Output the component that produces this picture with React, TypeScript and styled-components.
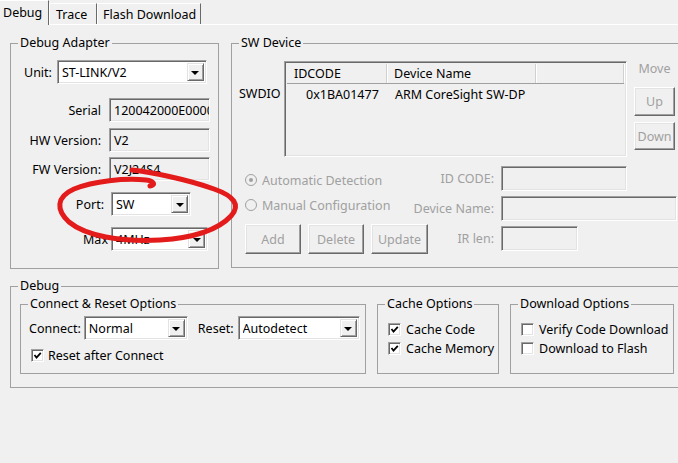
import React from 'react';
import styled, { createGlobalStyle } from 'styled-components';

const GlobalStyle = createGlobalStyle`
  html, body {
    margin: 0;
    padding: 0;
    background: #f0f0f0;
  }
  body {
    font-family: "Noto Sans", "DejaVu Sans", sans-serif;
    font-size: 12px;
    color: #000;
  }
`;

const Window = styled.div`
  position: relative;
  width: 678px;
  height: 463px;
  overflow: hidden;
  background: #f0f0f0;
`;

const TabStrip = styled.div`
  display: flex;
  align-items: flex-start;
  height: 25px;
  box-shadow: inset 0 -1px 0 #fff;
`;

const Tab = styled.div<{ $active?: boolean; $w: number; $pad: number }>`
  box-sizing: border-box;
  width: ${p => p.$w}px;
  height: ${p => (p.$active ? 25 : 21)}px;
  margin-top: ${p => (p.$active ? 0 : 3)}px;
  padding-left: ${p => p.$pad}px;
  padding-bottom: ${p => (p.$active ? 2 : 0)}px;
  display: flex;
  align-items: center;
  background: #f0f0f0;
  border-left: ${p => (p.$active ? 0 : 1)}px solid #fff;
  border-top: 1px solid #fff;
  border-right: 1px solid #696969;
  white-space: nowrap;
  font-size: 12.5px;
`;

const Page = styled.div`
  display: flex;
  flex-direction: column;
  padding: 11px 0 0 10px;
`;

const TopRow = styled.div`
  display: flex;
  gap: 12px;
`;

const Group = styled.fieldset<{ $w: number; $h: number }>`
  margin: 0;
  padding: 0;
  min-width: 0;
  flex-shrink: 0;
  box-sizing: border-box;
  width: ${p => p.$w}px;
  height: ${p => p.$h}px;
  border: 1px solid #a0a0a0;
`;

const Legend = styled.legend`
  margin-left: 7px;
  padding: 0 2px;
  line-height: 14px;
  font-size: 12.5px;
  white-space: nowrap;
`;

/* ---------- inputs ---------- */

const Sunken = styled.div<{ $w: number; $h?: number; $white?: boolean }>`
  box-sizing: border-box;
  width: ${p => p.$w}px;
  height: ${p => p.$h ?? 24}px;
  flex-shrink: 0;
  display: flex;
  align-items: center;
  overflow: hidden;
  white-space: nowrap;
  background: ${p => (p.$white ? '#fff' : '#f0f0f0')};
  border-top: 1px solid #a0a0a0;
  border-left: 1px solid #a0a0a0;
  border-right: 1px solid #fff;
  border-bottom: 1px solid #fff;
  box-shadow: inset 1px 1px 0 #696969, inset -1px -1px 0 #e3e3e3;
  padding-left: 4px;
`;

const ComboText = styled.span`
  flex: 1;
  overflow: hidden;
`;

const DropButton = styled.span`
  box-sizing: border-box;
  width: 17px;
  height: calc(100% - 4px);
  margin-right: 2px;
  display: flex;
  align-items: center;
  justify-content: center;
  background: #f0f0f0;
  border-top: 1px solid #e3e3e3;
  border-left: 1px solid #e3e3e3;
  border-right: 1px solid #696969;
  border-bottom: 1px solid #696969;
  box-shadow: inset 1px 1px 0 #fff, inset -1px -1px 0 #a0a0a0;

  &::after {
    content: '';
    border-left: 4px solid transparent;
    border-right: 4px solid transparent;
    border-top: 4px solid #000;
    margin-top: 1px;
  }
`;

const Combo: React.FC<{ w: number; h?: number; value: string }> = ({ w, h, value }) => (
  <Sunken $w={w} $h={h} $white>
    <ComboText>{value}</ComboText>
    <DropButton />
  </Sunken>
);

const Button = styled.div<{ $w: number; $h: number; $top?: number }>`
  box-sizing: border-box;
  width: ${p => p.$w}px;
  height: ${p => p.$h}px;
  margin-top: ${p => p.$top ?? 0}px;
  flex-shrink: 0;
  display: flex;
  align-items: center;
  justify-content: center;
  color: #a0a0a0;
  font-size: 12.5px;
  border-top: 1px solid #fff;
  border-left: 1px solid #fff;
  border-right: 1px solid #696969;
  border-bottom: 1px solid #696969;
  box-shadow: inset -1px -1px 0 #a0a0a0, inset 1px 1px 0 #e3e3e3;
`;

const CheckBox = styled.span`
  box-sizing: border-box;
  width: 13px;
  height: 13px;
  flex-shrink: 0;
  display: flex;
  align-items: center;
  justify-content: center;
  background: #fff;
  border-top: 1px solid #a0a0a0;
  border-left: 1px solid #a0a0a0;
  border-right: 1px solid #fff;
  border-bottom: 1px solid #fff;
  box-shadow: inset 1px 1px 0 #696969, inset -1px -1px 0 #e3e3e3;
`;

const Check: React.FC<{ checked?: boolean }> = ({ checked }) => (
  <CheckBox>
    {checked && (
      <svg width="9" height="9" viewBox="0 0 9 9">
        <path d="M1.5 4 L3.5 6.5 L7.8 1.8" fill="none" stroke="#000" strokeWidth="1.8" />
      </svg>
    )}
  </CheckBox>
);

const Radio = styled.span<{ $on?: boolean }>`
  box-sizing: border-box;
  width: 12px;
  height: 12px;
  flex-shrink: 0;
  border-radius: 50%;
  border: 1px solid #a0a0a0;
  background: #f0f0f0;
  display: flex;
  align-items: center;
  justify-content: center;

  &::after {
    content: '';
    width: 4px;
    height: 4px;
    border-radius: 50%;
    background: ${p => (p.$on ? '#a0a0a0' : 'transparent')};
  }
`;

const OptionRow = styled.div<{ $gap: number; $top: number; $h?: number; $left?: number }>`
  display: flex;
  align-items: center;
  gap: ${p => p.$gap}px;
  margin-top: ${p => p.$top}px;
  margin-left: ${p => p.$left ?? 0}px;
  height: ${p => p.$h ?? 16}px;
  white-space: nowrap;
  font-size: 12.5px;
`;

const Dim = styled.span`
  color: #a0a0a0;
`;

/* ---------- debug adapter ---------- */

const AdapterBody = styled.div`
  display: flex;
  flex-direction: column;
`;

const UnitRow = styled.div`
  display: flex;
  align-items: center;
  margin-top: 10px;
  padding-left: 13px;
  gap: 5px;
  font-size: 12.5px;
`;

const FieldRow = styled.div<{ $top: number; $labelW: number; $gap: number }>`
  display: flex;
  align-items: center;
  margin-top: ${p => p.$top}px;
  font-size: 12.5px;

  & > label {
    box-sizing: border-box;
    width: ${p => p.$labelW}px;
    margin-right: ${p => p.$gap}px;
    text-align: right;
    white-space: nowrap;
    overflow: hidden;
    flex-shrink: 0;
  }
`;

/* ---------- sw device ---------- */

const DeviceTop = styled.div`
  display: flex;
  margin-top: 11px;
  padding-left: 7px;
`;

const SideLabel = styled.div`
  width: 45px;
  padding-top: 26px;
  line-height: 14px;
  font-size: 12.5px;
`;

const ListView = styled.div`
  box-sizing: border-box;
  width: 343px;
  height: 96px;
  padding: 2px;
  background: #f0f0f0;
  border-top: 1px solid #a0a0a0;
  border-left: 1px solid #a0a0a0;
  border-right: 1px solid #fff;
  border-bottom: 1px solid #fff;
  box-shadow: inset 1px 1px 0 #696969, inset -1px -1px 0 #e3e3e3;
  font-size: 12.5px;
`;

const HeaderRow = styled.div`
  display: flex;
  height: 19px;
  border-bottom: 1px solid #a0a0a0;
`;

const HeaderCell = styled.div<{ $w: number }>`
  box-sizing: border-box;
  width: ${p => p.$w}px;
  padding-left: 7px;
  display: flex;
  align-items: center;
  border-right: 1px solid #d0d0d0;
  box-shadow: 1px 0 0 #fff;
`;

const DataRow = styled.div`
  display: flex;
  height: 20px;
  align-items: center;
`;

const DataCell = styled.div<{ $w: number; $pad: number }>`
  width: ${p => p.$w}px;
  padding-left: ${p => p.$pad}px;
  box-sizing: border-box;
  white-space: nowrap;
`;

const MoveColumn = styled.div`
  display: flex;
  flex-direction: column;
  align-items: center;
  margin-left: 7px;
  width: 41px;
`;

const MoveLabel = styled.div`
  margin-top: 1px;
  line-height: 14px;
  color: #a0a0a0;
  font-size: 12.5px;
`;

const DeviceBottom = styled.div`
  display: flex;
  margin-top: 9px;
`;

const ModeColumn = styled.div`
  box-sizing: border-box;
  width: 169px;
  padding: 4px 0 0 13px;
  display: flex;
  flex-direction: column;
`;

const ButtonRow = styled.div`
  display: flex;
  gap: 7px;
  margin-top: 9px;
`;

const ConfigGrid = styled.div`
  display: grid;
  grid-template-columns: 93px auto;
  grid-auto-rows: 25px;
  column-gap: 7px;
  row-gap: 5px;
  align-items: center;
  font-size: 12.5px;

  & > label {
    text-align: right;
    color: #a0a0a0;
    white-space: nowrap;
  }
`;

/* ---------- debug options ---------- */

const OptionsRow = styled.div`
  display: flex;
  gap: 11px;
  margin: 4px 0 0 9px;
`;

const GroupInner = styled.div<{ $pad: number }>`
  display: flex;
  flex-direction: column;
  padding-left: ${p => p.$pad}px;
`;

const ConnectRow = styled.div`
  display: flex;
  align-items: center;
  margin-top: 5px;
  font-size: 12.5px;
  white-space: nowrap;
`;

const InlineLabel = styled.label<{ $left: number; $right: number }>`
  margin-left: ${p => p.$left}px;
  margin-right: ${p => p.$right}px;
`;

/* ---------- annotation ---------- */

const Annotation = styled.svg`
  position: absolute;
  left: 0;
  top: 0;
  pointer-events: none;
`;

const App: React.FC = () => {
  return (
    <Window>
      <GlobalStyle />
      <TabStrip>
        <Tab $active $w={49} $pad={3}>Debug</Tab>
        <Tab $w={48} $pad={6}>Trace</Tab>
        <Tab $w={104} $pad={5}>Flash Download</Tab>
      </TabStrip>

      <Page>
        <TopRow>
          <Group $w={209} $h={233}>
            <Legend>Debug Adapter</Legend>
            <AdapterBody>
              <UnitRow>
                <label>Unit:</label>
                <Combo w={150} value="ST-LINK/V2" />
              </UnitRow>
              <FieldRow $top={14} $labelW={90} $gap={8}>
                <label>Serial</label>
                <Sunken $w={101}>120042000E0000</Sunken>
              </FieldRow>
              <FieldRow $top={6} $labelW={90} $gap={8}>
                <label>HW Version:</label>
                <Sunken $w={101}>V2</Sunken>
              </FieldRow>
              <FieldRow $top={5} $labelW={90} $gap={8}>
                <label>FW Version:</label>
                <Sunken $w={101}>V2J24S4</Sunken>
              </FieldRow>
              <FieldRow $top={11} $labelW={93} $gap={7}>
                <label>Port:</label>
                <Combo w={80} value="SW" />
              </FieldRow>
              <FieldRow $top={11} $labelW={97} $gap={3}>
                <label>Max</label>
                <Combo w={97} value="4MHz" />
              </FieldRow>
            </AdapterBody>
          </Group>

          <Group $w={470} $h={232}>
            <Legend>SW Device</Legend>
            <DeviceTop>
              <SideLabel>SWDIO</SideLabel>
              <ListView>
                <HeaderRow>
                  <HeaderCell $w={101}>IDCODE</HeaderCell>
                  <HeaderCell $w={150}>Device Name</HeaderCell>
                  <HeaderCell $w={89} />
                </HeaderRow>
                <DataRow>
                  <DataCell $w={101} $pad={19}>0x1BA01477</DataCell>
                  <DataCell $w={200} $pad={7}>ARM CoreSight SW-DP</DataCell>
                </DataRow>
              </ListView>
              <MoveColumn>
                <MoveLabel>Move</MoveLabel>
                <Button $w={41} $h={29} $top={11}>Up</Button>
                <Button $w={41} $h={28} $top={6}>Down</Button>
              </MoveColumn>
            </DeviceTop>
            <DeviceBottom>
              <ModeColumn>
                <OptionRow $gap={5} $top={0} $h={20}>
                  <Radio $on />
                  <Dim>Automatic Detection</Dim>
                </OptionRow>
                <OptionRow $gap={5} $top={5} $h={20}>
                  <Radio />
                  <Dim>Manual Configuration</Dim>
                </OptionRow>
                <ButtonRow>
                  <Button $w={56} $h={30}>Add</Button>
                  <Button $w={56} $h={30}>Delete</Button>
                  <Button $w={57} $h={30}>Update</Button>
                </ButtonRow>
              </ModeColumn>
              <ConfigGrid>
                <label>ID CODE:</label>
                <Sunken $w={126} $h={25} />
                <label>Device Name:</label>
                <Sunken $w={176} $h={25} />
                <label>IR len:</label>
                <Sunken $w={77} $h={25} />
              </ConfigGrid>
            </DeviceBottom>
          </Group>
        </TopRow>

        <Group $w={690} $h={109} style={{ marginTop: 10 }}>
          <Legend>Debug</Legend>
          <OptionsRow>
            <Group $w={346} $h={77}>
              <Legend>Connect &amp; Reset Options</Legend>
              <GroupInner $pad={8}>
                <ConnectRow>
                  <InlineLabel $left={0} $right={3}>Connect:</InlineLabel>
                  <Combo w={104} value="Normal" />
                  <InlineLabel $left={10} $right={4}>Reset:</InlineLabel>
                  <Combo w={122} value="Autodetect" />
                </ConnectRow>
                <OptionRow $gap={4} $top={7} $left={2}>
                  <Check checked />
                  <span>Reset after Connect</span>
                </OptionRow>
              </GroupInner>
            </Group>
            <Group $w={122} $h={77}>
              <Legend>Cache Options</Legend>
              <GroupInner $pad={10}>
                <OptionRow $gap={5} $top={10}>
                  <Check checked />
                  <span>Cache Code</span>
                </OptionRow>
                <OptionRow $gap={5} $top={3}>
                  <Check checked />
                  <span>Cache Memory</span>
                </OptionRow>
              </GroupInner>
            </Group>
            <Group $w={164} $h={77}>
              <Legend>Download Options</Legend>
              <GroupInner $pad={10}>
                <OptionRow $gap={5} $top={10}>
                  <Check />
                  <span>Verify Code Download</span>
                </OptionRow>
                <OptionRow $gap={5} $top={3}>
                  <Check />
                  <span>Download to Flash</span>
                </OptionRow>
              </GroupInner>
            </Group>
          </OptionsRow>
        </Group>
      </Page>

      <Annotation width="678" height="463" viewBox="0 0 678 463">
        <path
          d="M132 170 C150 172 186 179 214 189 C234 196 241 205 231 216 C217 231 192 238 160 240 C120 242 86 236 69 222 C56 210 56 197 74 189 C94 181 124 178 146 180 C154 181 156 185 150 186"
          fill="none"
          stroke="#e31b1b"
          strokeWidth="5"
          strokeLinecap="round"
          strokeLinejoin="round"
        />
      </Annotation>
    </Window>
  );
};

export default App;
